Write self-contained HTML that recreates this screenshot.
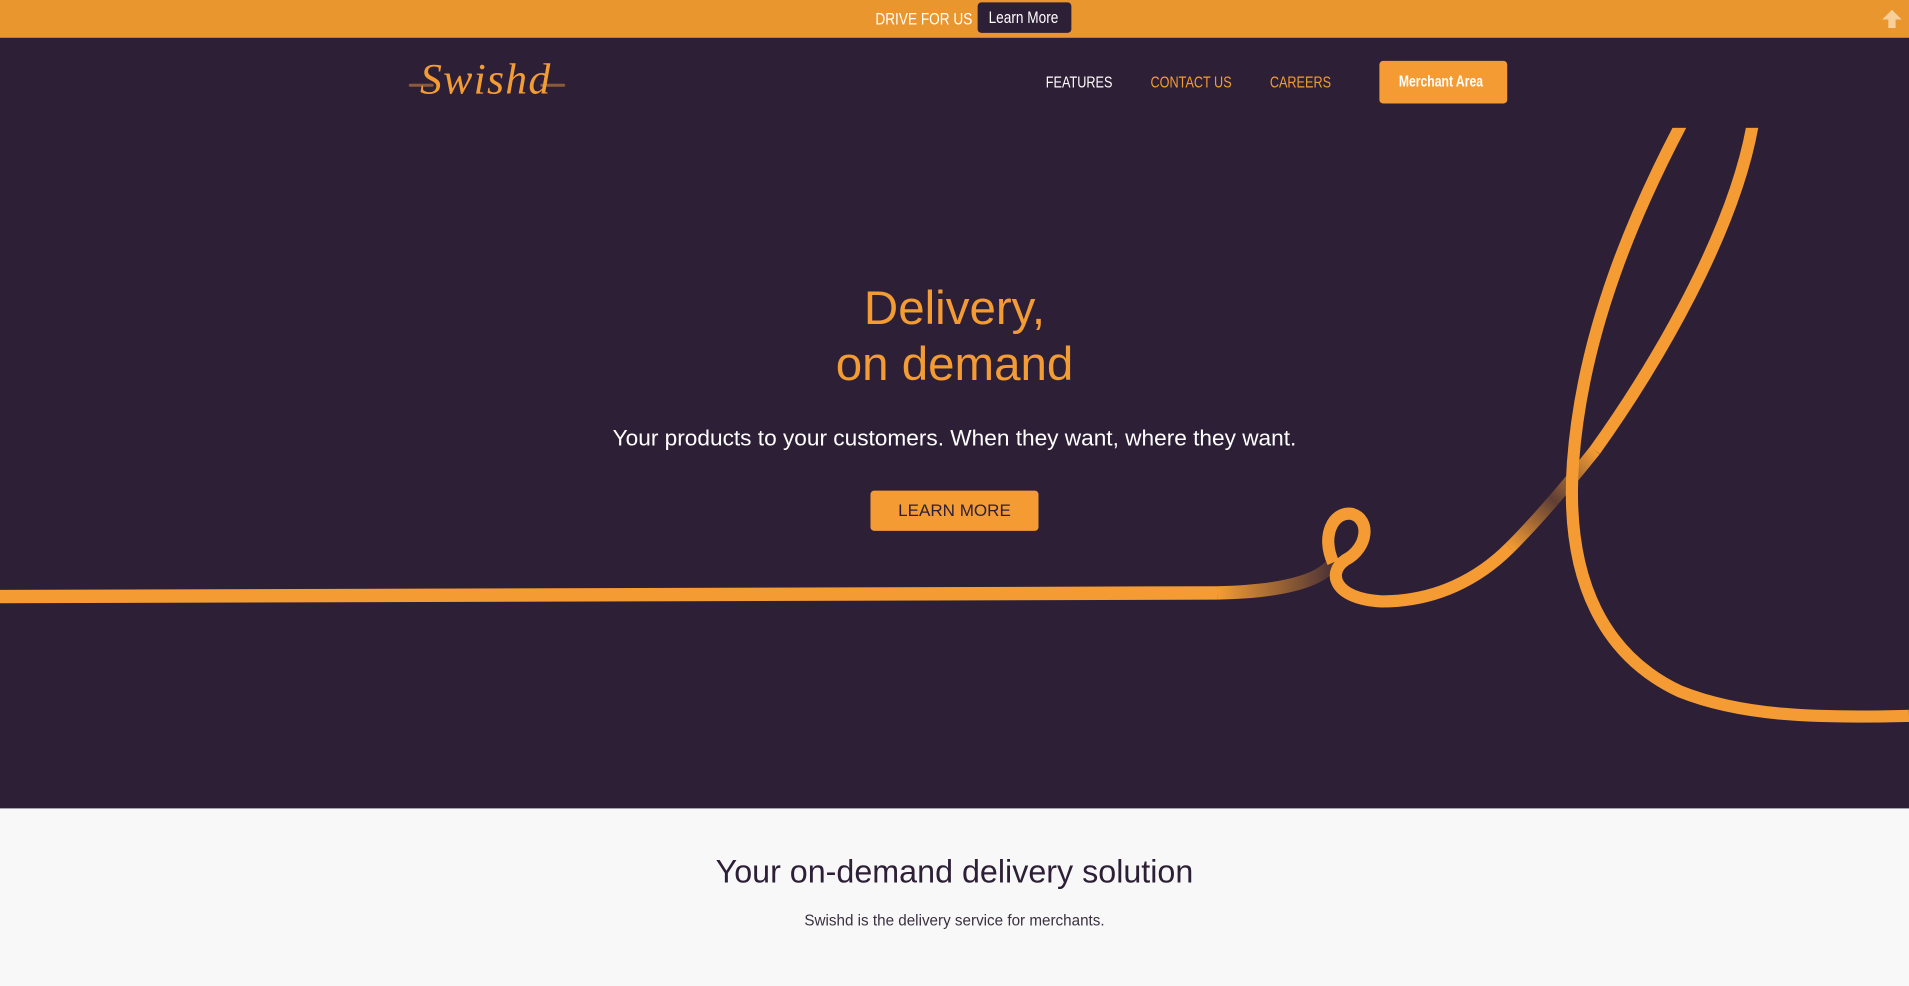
<!DOCTYPE html>
<html><head><meta charset="utf-8"><style>
html,body{margin:0;padding:0;width:1909px;height:986px;overflow:hidden;background:#f8f8f8}
#w{position:absolute;left:0;top:0;width:1568px;height:810px;transform:scale(1.21747);transform-origin:0 0;font-family:"Liberation Sans",sans-serif}
.top{position:absolute;left:0;top:0;width:1568px;height:31px;background:#e9962f}
.c{display:inline-block;transform:scaleX(0.8);transform-origin:0 0;white-space:nowrap}
.drive{position:absolute;left:719px;top:7px;color:#fff;font-size:14px}
.lm{position:absolute;left:803px;top:2px;width:77px;height:25px;background:#2d1f36;border-radius:3px;color:#fff;font-size:14px;line-height:25px}
.hero{position:absolute;left:0;top:31px;width:1568px;height:633px;background:#2d1f36;overflow:hidden}
.nav{position:absolute;top:60px;font-size:13px;color:#f39c33}
.ma{position:absolute;left:1133px;top:50px;width:105px;height:35px;background:#f49c33;border-radius:3px;color:#fff;font-size:12.5px;font-weight:bold;line-height:35px}
.h1{position:absolute;left:0;width:1568px;text-align:center;color:#f39c33;font-size:39px;line-height:46px;top:231px}
.sub{position:absolute;left:0;width:1568px;text-align:center;color:#fff;font-size:18.6px;top:349px}
.btn{position:absolute;left:715px;top:403px;width:138px;height:33px;background:#f49c33;border-radius:3px;color:#2d1f36;font-size:14px;line-height:33px;text-align:center}
.logo{position:absolute;left:345px;top:44px;font-family:"Liberation Serif",serif;font-style:italic;font-size:36px;color:#f39c33;letter-spacing:1px}
</style></head><body><div id="w">
<div class="top"></div>
<div class="drive"><span class="c">DRIVE FOR US</span></div>
<div class="lm"><span class="c" style="margin-left:9px">Learn More</span></div>
<svg style="position:absolute;left:1546px;top:8px" width="16" height="15" viewBox="0 0 16 15"><path d="M8 0 L16 8 L11 8 L11 15 L5 15 L5 8 L0 8 Z" fill="#f7cf9a"/></svg>
<div class="hero">
<svg width="1568" height="633" viewBox="0 31 1568 633" style="position:absolute;left:0;top:0">
<defs><linearGradient id="g" x1="1000" y1="0" x2="1095" y2="0" gradientUnits="userSpaceOnUse"><stop offset="0" stop-color="#f49c33"/><stop offset="1" stop-color="#f49c33" stop-opacity="0.15"/></linearGradient>
<linearGradient id="g2" x1="1240" y1="450" x2="1310" y2="370" gradientUnits="userSpaceOnUse"><stop offset="0" stop-color="#f49c33"/><stop offset="0.5" stop-color="#f49c33" stop-opacity="0.25"/><stop offset="1" stop-color="#f49c33"/></linearGradient></defs>
<path d="M0,490 L1000,487" stroke="#f49c33" stroke-width="11" fill="none"/>
<path d="M1000,487 C1050,486 1085,478 1095,462" stroke="url(#g)" stroke-width="11" fill="none"/>
<path d="M1095,462 C1085,440 1095,420 1110,422 C1126,426 1124,450 1105,460 C1090,470 1095,492 1135,494 C1180,494 1215,475 1240,450" stroke="#f49c33" stroke-width="10" fill="none"/>
<path d="M1240,450 C1265,425 1290,395 1310,370" stroke="url(#g2)" stroke-width="10" fill="none"/>
<path d="M1310,370 C1360,300 1425,190 1440,100" stroke="#f49c33" stroke-width="10" fill="none"/>
<path d="M1382,100 C1345,170 1300,270 1292,380 C1285,480 1320,540 1380,568 C1430,588 1490,590 1568,588" stroke="#f49c33" stroke-width="10" fill="none"/>
<rect x="0" y="31" width="1568" height="74" fill="#2d1f36"/>
</svg>
</div>
<svg style="position:absolute;left:335px;top:60px" width="130" height="20"><path d="M2 10 L20 10 M110 10 L128 10" stroke="#8a5a3a" stroke-width="2.5" stroke-linecap="round"/></svg>
<div class="logo">Swishd</div>
<div class="nav" style="left:859px;color:#fff"><span class="c">FEATURES</span></div>
<div class="nav" style="left:945px"><span class="c">CONTACT US</span></div>
<div class="nav" style="left:1043px"><span class="c">CAREERS</span></div>
<div class="ma"><span class="c" style="margin-left:16px">Merchant Area</span></div>
<div class="h1">Delivery,<br>on demand</div>
<div class="sub">Your products to your customers. When they want, where they want.</div>
<div class="btn">LEARN MORE</div>
<div style="position:absolute;left:0;top:701px;width:1568px;text-align:center;color:#2d1f36;font-size:26.5px">Your on-demand delivery solution</div>
<div style="position:absolute;left:0;top:749px;width:1568px;text-align:center;color:#3a3040;font-size:12.5px">Swishd is the delivery service for merchants.</div>
</div></body></html>
